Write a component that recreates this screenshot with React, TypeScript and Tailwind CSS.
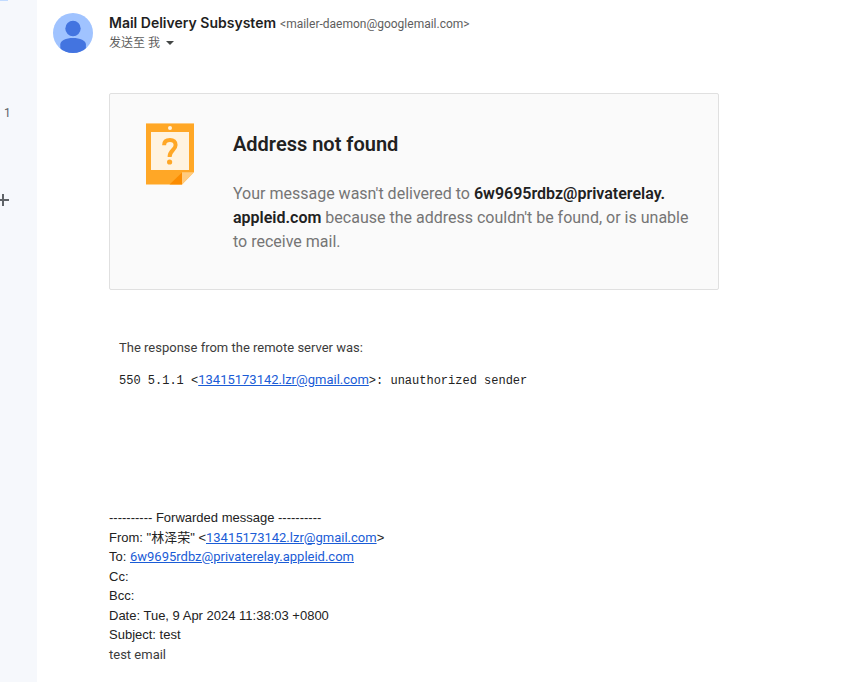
import type { ReactNode } from "react";

function MailLink({ address }: { address: string }) {
  return (
    <a
      href={`mailto:${address}`}
      className="font-['Roboto',sans-serif] text-[#1a5cd6] underline"
    >
      {address}
    </a>
  );
}

function Avatar() {
  return (
    <svg viewBox="0 0 40 40" className="size-10 shrink-0" role="img" aria-label="Sender">
      <defs>
        <clipPath id="avatar-circle">
          <circle cx="20" cy="20" r="20" />
        </clipPath>
      </defs>
      <g clipPath="url(#avatar-circle)">
        <rect width="40" height="40" fill="#a0c3ff" />
        <circle cx="20" cy="15.5" r="7.7" fill="#4374e0" />
        <path d="M7.3 40V31.5C7.3 27.5 13 25 20 25s12.9 2.5 12.9 6.5V40z" fill="#4374e0" />
      </g>
    </svg>
  );
}

function NotFoundIcon() {
  return (
    <svg viewBox="0 0 48 62" className="h-[62px] w-12 shrink-0" aria-hidden="true">
      <path d="M0 0h48v49L36 61.5H0z" fill="#ffa726" />
      <path d="M0 0h48v1H0z" fill="#ffca7d" />
      <path d="M36 49.5V61.5H23.5z" fill="#fb8c00" />
      <path d="M36 49.3h12L36 61.5z" fill="#ffcc80" />
      <rect x="5" y="9" width="38" height="38" fill="#fff3e0" />
      <circle cx="24" cy="5" r="2" fill="#fff3e0" />
      <path
        d="M18.1 22.2C18.1 18.6 20.5 16.9 24 16.9C27.5 16.9 29.6 18.9 29.6 22C29.6 27.2 23.6 27 23.6 34"
        fill="none"
        stroke="#ffa726"
        strokeWidth="4"
      />
      <circle cx="23.6" cy="39" r="2.6" fill="#ffa726" />
    </svg>
  );
}

function Line({ children }: { children?: ReactNode }) {
  return <p>{children}</p>;
}

export default function App() {
  return (
    <div className="flex min-h-screen bg-white font-['Roboto','Noto_Sans_CJK_SC',sans-serif] text-[13px] text-[#222222]">
      <aside className="flex w-[37px] shrink-0 flex-col bg-[#f6f8fc] text-[#5f6368]">
        <div className="h-px w-2 bg-[#c2dbff]" />
        <span className="mt-26 pl-1 text-xs leading-4">1</span>
        <button type="button" aria-label="Create label" className="mt-[73px] h-3 w-[9px]">
          <svg viewBox="0 0 9 12" className="h-3 w-[9px]" stroke="#5f6368" strokeWidth="2">
            <path d="M3 0v12M0 6h9" />
          </svg>
        </button>
      </aside>

      <main className="min-w-0 flex-1 px-4 pt-[13px]">
        <header className="flex gap-4">
          <Avatar />
          <div>
            <div className="flex items-baseline gap-1 leading-5">
              <h1 className="font-['Inter',sans-serif] text-sm leading-5 font-semibold text-[#1f1f1f]">
                Mail Delivery Subsystem
              </h1>
              <span className="text-xs leading-5 text-[#5e5e5e]">
                &lt;mailer-daemon@googlemail.com&gt;
              </span>
            </div>
            <button
              type="button"
              className="flex items-center gap-[6px] text-xs leading-[18px] text-[#5e5e5e]"
            >
              <span>发送至 我</span>
              <svg viewBox="0 0 8 4" className="h-1 w-2" fill="#444746" aria-hidden="true">
                <path d="M0 0h8L4 4z" />
              </svg>
            </button>
          </div>
        </header>

        <div className="pt-10 pl-14">
          <section className="flex max-w-[610px] gap-[39px] rounded-xs border border-[#e0e0e0] bg-[#fafafa] pt-[29px] pr-6 pb-[35px] pl-9">
            <NotFoundIcon />
            <div className="pt-[9px]">
              <h2 className="text-xl leading-6 font-semibold text-[#212121]">Address not found</h2>
              <p className="pt-[26px] text-base text-[#757575]">
                Your message wasn't delivered to{" "}
                <b className="font-semibold text-[#212121]">6w9695rdbz@privaterelay.</b>
                <wbr />
                <b className="font-semibold text-[#212121]">appleid.com</b>{" "}
                because the address couldn't be found, or is unable to receive mail.
              </p>
            </div>
          </section>

          <section className="px-[10px] pt-12">
            <p className="leading-5 text-[#3c3c3c]">The response from the remote server was:</p>
            <p className="pt-3 leading-5">
              <code className="font-['Liberation_Mono',monospace] text-xs">550 5.1.1 &lt;</code>
              <MailLink address="13415173142.lzr@gmail.com" />
              <code className="font-['Liberation_Mono',monospace] text-xs">
                &gt;: unauthorized sender
              </code>
            </p>
          </section>

          <section className="pt-[118px] font-['Liberation_Sans','Noto_Sans_CJK_SC',sans-serif] leading-normal">
            <Line>---------- Forwarded message ----------</Line>
            <Line>
              From: "林泽荣" &lt;
              <MailLink address="13415173142.lzr@gmail.com" />
              &gt;
            </Line>
            <Line>
              To: <MailLink address="6w9695rdbz@privaterelay.appleid.com" />
            </Line>
            <Line>Cc:</Line>
            <Line>Bcc:</Line>
            <Line>Date: Tue, 9 Apr 2024 11:38:03 +0800</Line>
            <Line>Subject: test</Line>
            <p className="font-['Roboto',sans-serif] text-[#3c3c3c]">test email</p>
          </section>
        </div>
      </main>
    </div>
  );
}
